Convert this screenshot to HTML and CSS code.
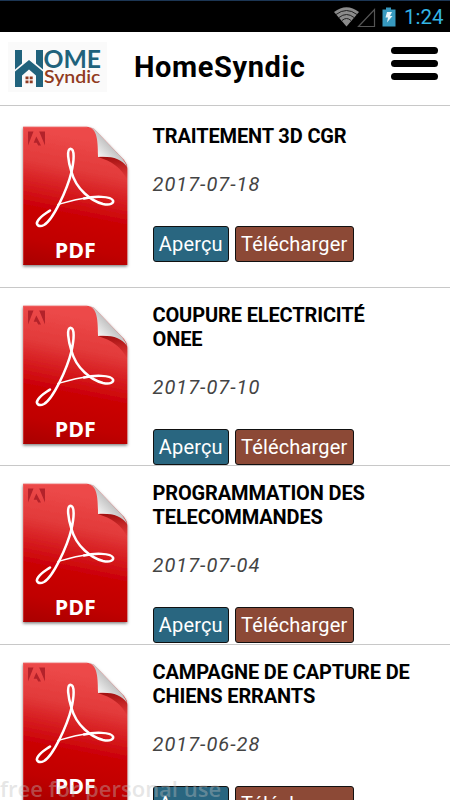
FILE: index.html
```html
<!DOCTYPE html>
<html lang="fr">
  <head>
    <meta charset="utf-8">
    <title>HomeSyndic</title>
    <link rel="stylesheet" href="styles.css">
  </head>
  <body>
    <svg class="defs" width="0" height="0">
      <defs>
        <linearGradient id="red" x1="0.15" y1="0" x2="0" y2="1">
          <stop offset="0" stop-color="#ed4a4a"/>
          <stop offset="0.25" stop-color="#e23a3a"/>
          <stop offset="0.57" stop-color="#cb0006"/>
          <stop offset="0.8" stop-color="#c00005"/>
          <stop offset="1" stop-color="#a80006"/>
        </linearGradient>
        <linearGradient id="fold" x1="0" y1="1" x2="0.6" y2="0.4">
          <stop offset="0" stop-color="#fff"/>
          <stop offset="0.5" stop-color="#eee"/>
          <stop offset="1" stop-color="#bbb"/>
        </linearGradient>
        <linearGradient id="foldshade" x1="0" y1="0" x2="0" y2="1">
          <stop offset="0" stop-color="#8a0000" stop-opacity="0.75"/>
          <stop offset="1" stop-color="#a00000" stop-opacity="0"/>
        </linearGradient>
        <filter id="shadow" x="-20%" y="-20%" width="140%" height="140%">
          <feDropShadow dx="0" dy="1.5" stdDeviation="1.8" flood-color="#000" flood-opacity="0.5"/>
        </filter>
        <symbol id="pdf" viewBox="0 0 150 178">
          <g filter="url(#shadow)">
            <path fill="url(#red)" d="M23 17.8H87C91 17.8 94 20 97 23L124 51Q127.300 55 127.300 59V156H23Z"/>
          </g>
          <path d="M23.400 155.500V18.200H87" fill="none" stroke="#f08080" stroke-opacity="0.5" stroke-width="0.8"/>
          <path fill="url(#foldshade)" d="M98 48H120Q127.300 54 127.300 60V71C122 59 111 52 98 48Z"/>
          <path fill="url(#fold)" d="M88 17.800C96 20 98 27 98 48C112 47 122 50 127 58Q126 54 122 49L98 24Q93 18 88 17.800Z"/>
          <g fill="#b3222a">
            <path d="M28 22.500H33.500L28 36.500ZM39.200 22.500H45V36.500ZM36.300 27.500L41 36.500H38.200L36.800 33.700H33.700Z"/>
          </g>
          <g fill="none" stroke="#fff" stroke-linecap="round" stroke-linejoin="round">
            <path stroke-width="2.500" d="M71.500 63C68 52 66.500 40 70.500 39.700C75 40 74 52 71.500 63C67 81 53 111 44 116C39 118.500 35 116 38 111.500C41 107 45 105 50 101.500"/>
            <path stroke-width="2.500" d="M71.500 63C76 80 91 92 103 95C110 96.500 114 94.500 113 91.500C111 87 94 87 84 89.500"/>
            <path stroke-width="1.500" d="M58 95.500C67 93 77 90 86 89"/>
          </g>
          <text class="pdf-label" x="54.800" y="149" textLength="41" lengthAdjust="spacingAndGlyphs">PDF</text>
        </symbol>
      </defs>
    </svg>

    <div class="statusbar">
      <svg class="status-icons" width="64" height="24" viewBox="0 0 64 24">
        <path fill="#8b8b8b" d="M0 7Q12.500-2.500 25 7L12.500 21.500Z"/>
        <path d="M2 9.500Q12.500 1.500 23 9.500M5 12.500Q12.500 6.500 20 12.500M8 15.500Q12.500 11.500 17 15.500" fill="none" stroke="#202020" stroke-width="1"/>
        <path d="M24.500 21.500L40.500 4.500V21.500Z" fill="none" stroke="#555" stroke-width="1.200"/>
        <path d="M48.500 4.500H52V2.500H57V4.500H61.500V21.500H48.500Z" fill="#3799bf"/>
        <path d="M53 7H58L56 11H58.500L53 17.500L54 12.500H51.500Z" fill="#e8f5fa"/>
      </svg>
      <span class="clock">1:24</span>
    </div>

    <div class="header">
      <svg class="logo" width="99" height="50" viewBox="0 0 99 50">
        <rect width="99" height="50" fill="#fafafa"/>
        <g fill="#20627c">
          <path d="M7 8H14V21.500L7 27.500ZM28 8H35V27.500L28 21.500Z"/>
          <path d="M7 29.500L21 18L35 29.500V45H28V33.500L21 27.500L14 33.500V45H7Z"/>
        </g>
        <path fill="#913b21" d="M17.500 34.500H20.500V37.300H17.500ZM21.700 34.500H24.700V37.300H21.700ZM17.500 38.500H20.500V41.300H17.500ZM21.700 38.500H24.700V41.300H21.700Z"/>
        <text class="logo-home" x="35.500" y="26" textLength="57.500" lengthAdjust="spacingAndGlyphs">OME</text>
        <text class="logo-syndic" x="36" y="41" textLength="56.500" lengthAdjust="spacingAndGlyphs">Syndic</text>
      </svg>
      <h1>HomeSyndic</h1>
      <div class="menu">
        <span></span>
        <span></span>
        <span></span>
      </div>
    </div>

    <div class="documents">
      <div class="document">
        <svg class="pdf" width="150" height="178"><use href="#pdf"/></svg>
        <div class="details">
          <h3>TRAITEMENT 3D CGR</h3>
          <p class="date">2017-07-18</p>
          <div class="buttons"><a class="btn preview">Aperçu</a><a class="btn download">Télécharger</a></div>
        </div>
      </div>
      <div class="document">
        <svg class="pdf" width="150" height="178"><use href="#pdf"/></svg>
        <div class="details">
          <h3>COUPURE ELECTRICITÉ ONEE</h3>
          <p class="date">2017-07-10</p>
          <div class="buttons"><a class="btn preview">Aperçu</a><a class="btn download">Télécharger</a></div>
        </div>
      </div>
      <div class="document">
        <svg class="pdf" width="150" height="178"><use href="#pdf"/></svg>
        <div class="details">
          <h3>PROGRAMMATION DES TELECOMMANDES</h3>
          <p class="date">2017-07-04</p>
          <div class="buttons"><a class="btn preview">Aperçu</a><a class="btn download">Télécharger</a></div>
        </div>
      </div>
      <div class="document">
        <svg class="pdf" width="150" height="178"><use href="#pdf"/></svg>
        <div class="details">
          <h3>CAMPAGNE DE CAPTURE DE CHIENS ERRANTS</h3>
          <p class="date">2017-06-28</p>
          <div class="buttons"><a class="btn preview">Aperçu</a><a class="btn download">Télécharger</a></div>
        </div>
      </div>
    </div>
    <div class="watermark">free for personal use</div>
  </body>
</html>
```

FILE: styles.css
```css
html, body {
height: 800px;
overflow: hidden;
}
body {
position: relative;
margin: 0;
background: #fff;
font-family: Roboto, Arial, sans-serif;
color: #000;
}
.defs {
display: block;
}
.statusbar {
box-sizing: border-box;
display: flex;
justify-content: flex-end;
align-items: center;
height: 32px;
padding-right: 8px;
border-top: 1px solid #1c3654;
background: #000;
}
.status-icons {
margin-right: 6px;
}
.clock {
width: 38px;
font-size: 20.5px;
line-height: 32px;
color: #33b5e5;
white-space: nowrap;
}
.header {
box-sizing: border-box;
display: flex;
align-items: center;
height: 74px;
padding: 0 12px 4px 8px;
border-bottom: 1px solid #c8c8c8;
}
.logo {
margin-right: 27px;
}
.logo-home {
font: 700 25px Lato, sans-serif;
fill: #20627c;
}
.logo-syndic {
font: 600 18px Lato, sans-serif;
fill: #913b21;
}
h1 {
flex: 1;
margin: 0;
font-size: 29px;
font-weight: 700;
line-height: 34px;
letter-spacing: 0.6px;
}
.menu {
display: flex;
flex-direction: column;
gap: 6px;
width: 47px;
margin-bottom: 6px;
}
.menu span {
height: 7px;
border-radius: 4px;
background: #000;
}
.documents {
padding-top: 3px;
}
.document {
box-sizing: border-box;
display: flex;
height: 178.6px;
border-bottom: 1px solid #c8c8c8;
}
.pdf {
flex: none;
margin-right: 2.5px;
}
.pdf-label {
font: 700 22px "Open Sans", sans-serif;
fill: #fff;
}
.details {
display: flex;
flex-direction: column;
width: 262px;
padding-top: 15px;
}
h3 {
margin: 0 0 24px;
font-size: 20px;
line-height: 24px;
letter-spacing: -0.13px;
}
.date {
margin: 0 0 30px;
font-size: 20px;
font-style: italic;
line-height: 24px;
letter-spacing: 1px;
color: #444;
}
.buttons {
display: flex;
gap: 6px;
}
.btn {
box-sizing: border-box;
height: 36px;
border: 1px solid #111;
border-radius: 3px;
font-size: 20px;
line-height: 34px;
letter-spacing: 0.15px;
text-align: center;
color: #fff;
}
.preview {
width: 76.5px;
background: #296680;
}
.download {
width: 118.5px;
background: #8c4936;
}
.watermark {
position: absolute;
left: 0;
top: 773px;
font: 600 22px/30px "Open Sans", sans-serif;
color: rgba(190, 190, 190, 0.4);
white-space: nowrap;
}
```
